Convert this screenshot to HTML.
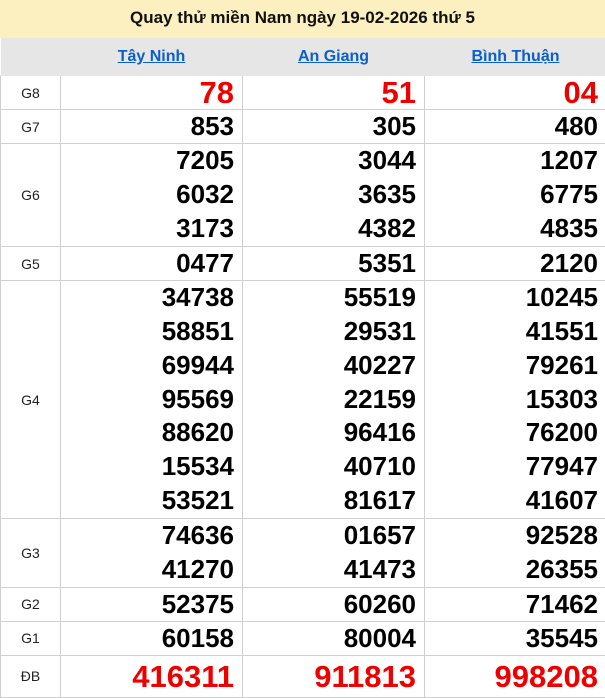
<!DOCTYPE html>
<html><head><meta charset="utf-8"><style>
*{margin:0;padding:0;box-sizing:border-box}
body{width:605px;height:696px;background:#fff;font-family:"Liberation Sans",Arial,sans-serif;position:relative;overflow:hidden}
.t{position:absolute;left:0;top:0;width:605px;height:38px;background:#fcf0c0;text-align:center;font-weight:bold;font-size:17px;line-height:36px;color:#111}
table{position:absolute;top:38px;left:0;border-collapse:collapse;width:606px;table-layout:fixed}
td{border:1px solid #d0d0d0;vertical-align:middle}
th{background:#e6e6e6;height:37px;border:1px solid #e6e6e6;border-left:1px solid #d6d6d6;font-size:16px;color:#0a5fcc}
th a{color:#0a5fcc;text-decoration:underline}
td.l{text-align:center;font-size:14px;color:#222;width:60px}
td.n{text-align:right;padding-right:8px;font-weight:bold;font-size:26px;line-height:33px;color:#000}
td.m{line-height:33.8px}
td.r{color:#e00;font-size:31px}
</style></head><body>
<div class="t">Quay thử miền Nam ngày 19-02-2026 thứ 5</div>
<table>
<colgroup><col style="width:60px"><col style="width:182px"><col style="width:182px"><col style="width:182px"></colgroup>
<tr><th style="border-left:none"></th><th><a>Tây Ninh</a></th><th><a>An Giang</a></th><th><a>Bình Thuận</a></th></tr>
<tr style="height:34px"><td class="l">G8</td><td class="n r">78</td><td class="n r">51</td><td class="n r">04</td></tr>
<tr style="height:34px"><td class="l">G7</td><td class="n">853</td><td class="n">305</td><td class="n">480</td></tr>
<tr style="height:103px"><td class="l">G6</td><td class="n m">7205<br>6032<br>3173</td><td class="n m">3044<br>3635<br>4382</td><td class="n m">1207<br>6775<br>4835</td></tr>
<tr style="height:34px"><td class="l">G5</td><td class="n">0477</td><td class="n">5351</td><td class="n">2120</td></tr>
<tr style="height:238px"><td class="l">G4</td><td class="n m">34738<br>58851<br>69944<br>95569<br>88620<br>15534<br>53521</td><td class="n m">55519<br>29531<br>40227<br>22159<br>96416<br>40710<br>81617</td><td class="n m">10245<br>41551<br>79261<br>15303<br>76200<br>77947<br>41607</td></tr>
<tr style="height:68px"><td class="l">G3</td><td class="n m">74636<br>41270</td><td class="n m">01657<br>41473</td><td class="n m">92528<br>26355</td></tr>
<tr style="height:34px"><td class="l">G2</td><td class="n">52375</td><td class="n">60260</td><td class="n">71462</td></tr>
<tr style="height:34px"><td class="l">G1</td><td class="n">60158</td><td class="n">80004</td><td class="n">35545</td></tr>
<tr style="height:42px"><td class="l">ĐB</td><td class="n r">416311</td><td class="n r">911813</td><td class="n r">998208</td></tr>
</table>
</body></html>
